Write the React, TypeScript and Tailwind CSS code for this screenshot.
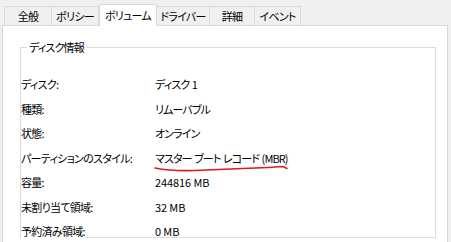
const tabs: { label: string; w: string; active?: boolean }[] = [
  { label: "全般", w: "w-[48px]" },
  { label: "ポリシー", w: "w-[48px]" },
  { label: "ボリューム", w: "w-[58px]", active: true },
  { label: "ドライバー", w: "w-[54px]" },
  { label: "詳細", w: "w-[46px]" },
  { label: "イベント", w: "w-[47px]" },
];

// [label, value, value is mostly kana]
const rows: [string, string, boolean][] = [
  ["ディスク:", "ディスク 1", true],
  ["種類:", "リムーバブル", true],
  ["状態:", "オンライン", true],
  ["パーティションのスタイル:", "マスター ブート レコード (MBR)", true],
  ["容量:", "244816 MB", false],
  ["未割り当て領域:", "32 MB", false],
  ["予約済み領域:", "0 MB", false],
];

export default function App() {
  return (
    <div className="relative h-[242px] w-[451px] overflow-hidden bg-[#f0f0f0] text-[11px] text-black [font-family:'Noto_Sans_CJK_JP',sans-serif] [font-feature-settings:'palt']">
      <div className="flex h-[26px] items-start pl-[4px] pt-[4px]">
        {tabs.map((t) =>
          t.active ? (
            <div
              key={t.label}
              className={`${t.w} relative z-10 flex h-[22px] items-center justify-center whitespace-nowrap border-x border-t border-[#d9d9d9] bg-white leading-none tracking-[-0.7px]`}
            >
              {t.label}
            </div>
          ) : (
            <div
              key={t.label}
              className={`${t.w} -ml-px mt-[2px] flex h-[19px] items-center justify-center whitespace-nowrap border-x border-t border-[#d9d9d9] bg-[#f0f0f0] leading-none tracking-[-0.7px] first:ml-0`}
            >
              {t.label}
            </div>
          )
        )}
      </div>

      <div className="-mt-px ml-[2px] h-[240px] w-[446px] border border-[#d9d9d9] bg-white">
        <div className="relative ml-[17px] mt-[21px] h-[191px] w-[416px] border border-[#dcdcdc]">
          <span className="absolute -top-[9px] left-[6px] bg-white px-[2px] leading-[16px] tracking-[-0.8px]">
            ディスク情報
          </span>
          <div className="grid auto-rows-[24.5px] pt-[24px]">
            {rows.map(([k, v, kana]) => (
              <div key={k} className="flex items-center">
                <span className="w-[134px] whitespace-nowrap">
                  <span className="bg-white tracking-[-0.7px]">{k}</span>
                </span>
                <span
                  className={
                    kana
                      ? "whitespace-nowrap tracking-[-0.9px] [word-spacing:1px]"
                      : "tracking-[-0.1px]"
                  }
                >
                  {v}
                </span>
              </div>
            ))}
          </div>
        </div>
      </div>

      <svg
        className="pointer-events-none absolute left-0 top-0"
        width="451"
        height="242"
        viewBox="0 0 451 242"
      >
        <path
          d="M155,168 C165,170 180,171 195,170.5 C215,169.5 240,168.5 262,167.8 C272,167.4 279,166.5 283,166.5 L287,168.5"
          fill="none"
          stroke="#e01a1a"
          strokeWidth="1.6"
          strokeLinecap="round"
        />
      </svg>
    </div>
  );
}
